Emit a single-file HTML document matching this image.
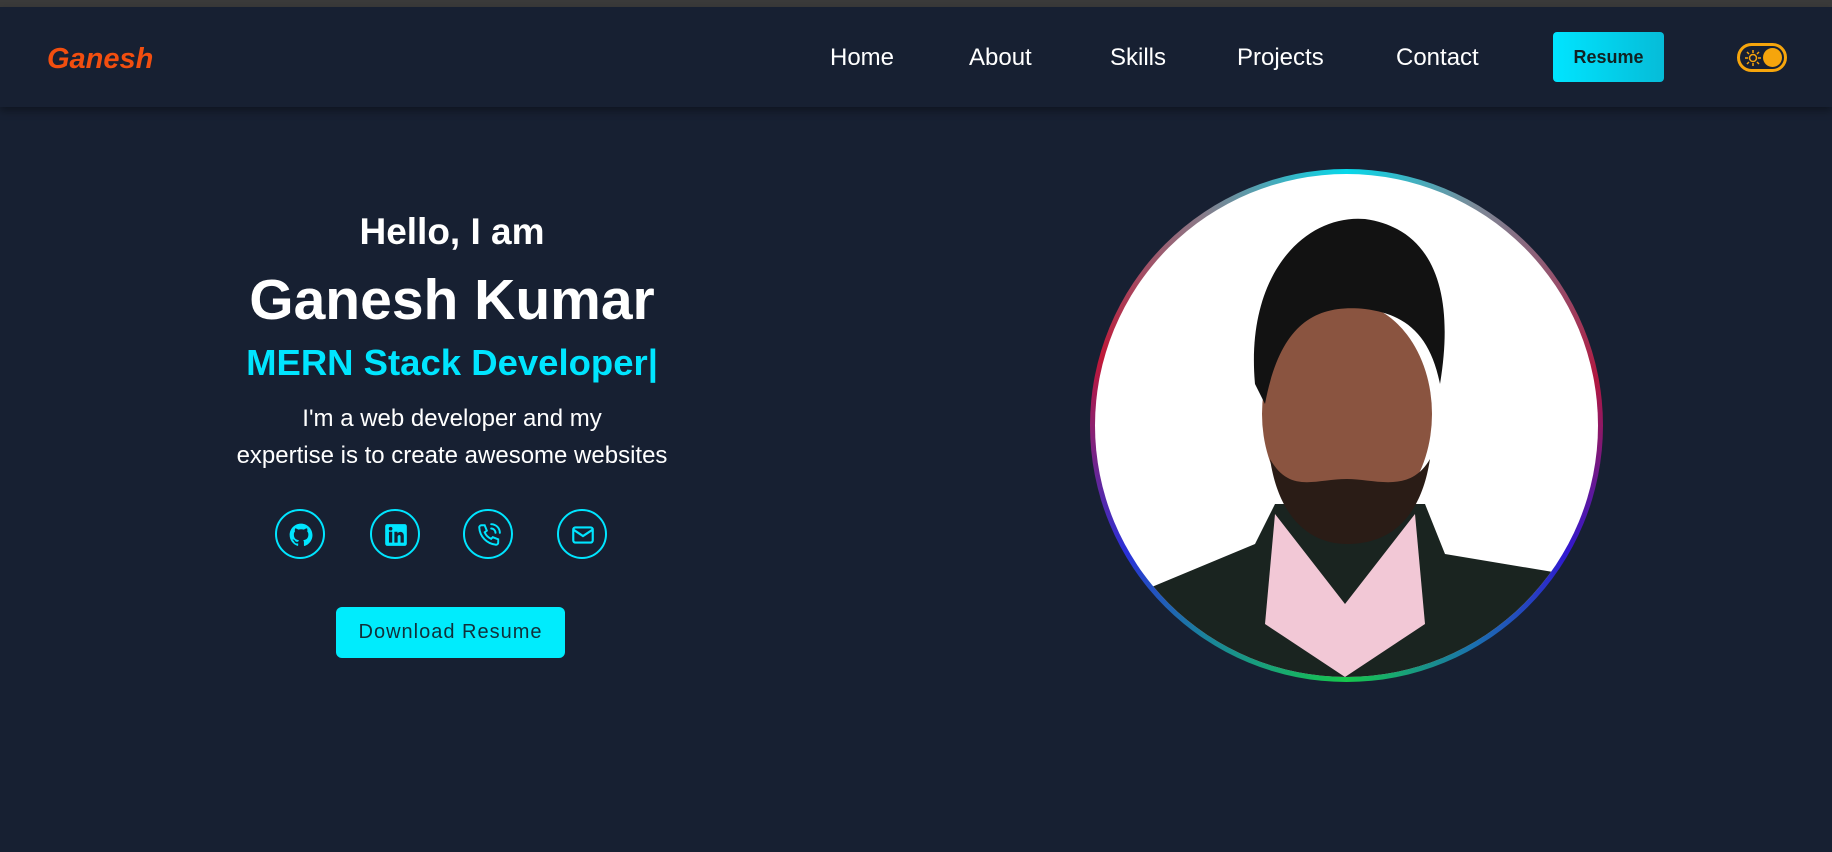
<!DOCTYPE html>
<html><head><meta charset="utf-8"><style>
*{margin:0;padding:0;box-sizing:border-box}
body{width:1832px;height:852px;background:#172032;font-family:"Liberation Sans",sans-serif;overflow:hidden;position:relative;color:#fff}
.top{position:absolute;left:0;top:0;width:1832px;height:7px;background:#3a3a3a}
nav{position:absolute;top:7px;left:0;width:1832px;height:100px;background:#172032;box-shadow:0 4px 8px rgba(0,0,0,.35)}
.logo{position:absolute;left:47px;top:36px;font-size:29px;font-weight:bold;color:#f24e0f;font-style:italic;font-family:"Comic Sans MS","Liberation Sans",sans-serif}
.nl{position:absolute;top:37px;font-size:24px;color:#fff}
.rb{position:absolute;left:1553px;top:25px;width:111px;height:50px;border-radius:4px;background:linear-gradient(90deg,#00e5ff,#06bcd8);color:#122;font-weight:bold;font-size:18px;text-align:center;line-height:50px}
.tg{position:absolute;left:1737px;top:36px;width:50px;height:29px;border:3px solid #f6a50c;border-radius:15px}
.tg .k{position:absolute;right:2px;top:2px;width:19px;height:19px;border-radius:50%;background:#f6a50c}
.c{position:absolute;left:0;width:904px;text-align:center}
.ic{position:absolute;top:509px;width:50px;height:50px;border:2px solid #00e5ff;border-radius:50%}
.ic svg{position:absolute;left:11px;top:11px}
.btn{position:absolute;left:336px;top:607px;width:229px;height:51px;background:#00ecfd;border-radius:6px;color:#12303a;font-size:20px;letter-spacing:1px;text-align:center;line-height:51px}
.ring{position:absolute;left:1090px;top:169px;width:513px;height:513px;border-radius:50%;background:conic-gradient(from 0deg,#06d8ea,#7a8a98 30deg,#b01840 80deg,#3018d0 120deg,#1a70b0 150deg,#16c84c 180deg,#1a80a0 215deg,#2a30d8 240deg,#c01838 285deg,#8a7a88 325deg,#06d8ea)}
.ph{position:absolute;left:5px;top:5px;width:503px;height:503px;border-radius:50%;background:#fff;overflow:hidden}
</style></head><body>
<div class="top"></div>
<nav>
<div class="logo">Ganesh</div>
<div class="nl" style="left:830px">Home</div>
<div class="nl" style="left:969px">About</div>
<div class="nl" style="left:1110px">Skills</div>
<div class="nl" style="left:1237px">Projects</div>
<div class="nl" style="left:1396px">Contact</div>
<div class="rb">Resume</div>
<div class="tg"><svg width="20" height="20" style="position:absolute;left:3px;top:2px" viewBox="0 0 20 20" stroke="#f6a50c" stroke-width="1.5" fill="none"><circle cx="10" cy="10" r="3.5"/><path d="M10 2v3M10 15v3M2 10h3M15 10h3M4 4l2 2M14 14l2 2M4 16l2-2M14 6l2-2"/></svg><div class="k"></div></div>
</nav>
<div class="c" style="top:211px;font-size:37px;font-weight:bold">Hello, I am</div>
<div class="c" style="top:267px;font-size:57px;font-weight:bold">Ganesh Kumar</div>
<div class="c" style="top:342px;font-size:36.5px;font-weight:bold;color:#00e5ff">MERN Stack Developer|</div>
<div class="c" style="top:400px;font-size:24px;line-height:37px">I'm a web developer and my<br>expertise is to create awesome websites</div>
<div class="ic" style="left:275px"><svg width="26" height="26" viewBox="0 0 24 24" fill="#00e5ff"><path d="M12 1.5C6.2 1.5 1.5 6.2 1.5 12c0 4.6 3 8.6 7.2 10 .5.1.7-.2.7-.5v-1.8c-2.9.6-3.5-1.4-3.5-1.4-.5-1.2-1.2-1.5-1.2-1.5-1-.7.1-.7.1-.7 1 .1 1.6 1.1 1.6 1.1.9 1.6 2.5 1.1 3.1.9.1-.7.4-1.1.7-1.4-2.3-.3-4.8-1.2-4.8-5.2 0-1.1.4-2.1 1.1-2.8-.1-.3-.5-1.4.1-2.8 0 0 .9-.3 2.9 1.1a10 10 0 0 1 5.2 0c2-1.4 2.900-1.1 2.9-1.1.6 1.4.2 2.5.1 2.8.7.7 1.1 1.7 1.1 2.8 0 4-2.5 4.9-4.8 5.2.4.3.7 1 .7 2v2.9c0 .3.2.6.7.5 4.2-1.4 7.2-5.4 7.2-10C22.5 6.2 17.8 1.5 12 1.5z"/></svg></div>
<div class="ic" style="left:370px"><svg width="26" height="26" viewBox="0 0 24 24" fill="#00e5ff"><path d="M4 2h16a2 2 0 0 1 2 2v16a2 2 0 0 1-2 2H4a2 2 0 0 1-2-2V4a2 2 0 0 1 2-2zm1.5 7v10h3V9zm1.5-4.5a1.7 1.7 0 1 0 0 3.4 1.7 1.7 0 0 0 0-3.4zM10.5 9v10h3v-5.5c0-1.4 2.7-2.4 2.7 0V19h3v-6.2c0-4.2-4.3-4.5-5.8-2.3V9z"/></svg></div>
<div class="ic" style="left:463px"><svg width="26" height="26" viewBox="0 0 24 24" fill="none" stroke="#00e5ff" stroke-width="1.8" stroke-linecap="round"><path d="M5 3l3 0 2 5-2 1.5a11 11 0 0 0 6 6L15.5 14l5 2v3a2 2 0 0 1-2 2A17 17 0 0 1 3 5a2 2 0 0 1 2-2zM14 6a4 4 0 0 1 4 4M14 2a8 8 0 0 1 8 8"/></svg></div>
<div class="ic" style="left:557px"><svg width="26" height="26" viewBox="0 0 24 24" fill="none" stroke="#00e5ff" stroke-width="2"><rect x="3" y="5" width="18" height="14" rx="2"/><path d="M3 7l9 6 9-6"/></svg></div>
<div class="btn">Download Resume</div>
<div class="ring"><div class="ph">
<svg width="503" height="503" viewBox="0 0 503 503">
<path d="M40 420 L160 370 L180 330 L330 330 L350 380 L470 400 L503 503 L0 503Z" fill="#1a2420"/>
<path d="M180 340 L250 430 L320 340 L330 450 L250 503 L170 450Z" fill="#f2c8d6"/>
<ellipse cx="252" cy="240" rx="85" ry="112" fill="#8a5440"/>
<path d="M160 210 C150 100 210 40 270 45 C340 55 360 120 345 210 C335 160 310 140 270 135 C220 130 185 150 170 230Z" fill="#121212"/>
<path d="M175 285 C185 350 220 370 252 370 C290 370 325 350 335 285 C315 320 280 305 252 305 C220 305 195 320 175 285Z" fill="#2a1c16"/>
</svg></div></div>
</body></html>
